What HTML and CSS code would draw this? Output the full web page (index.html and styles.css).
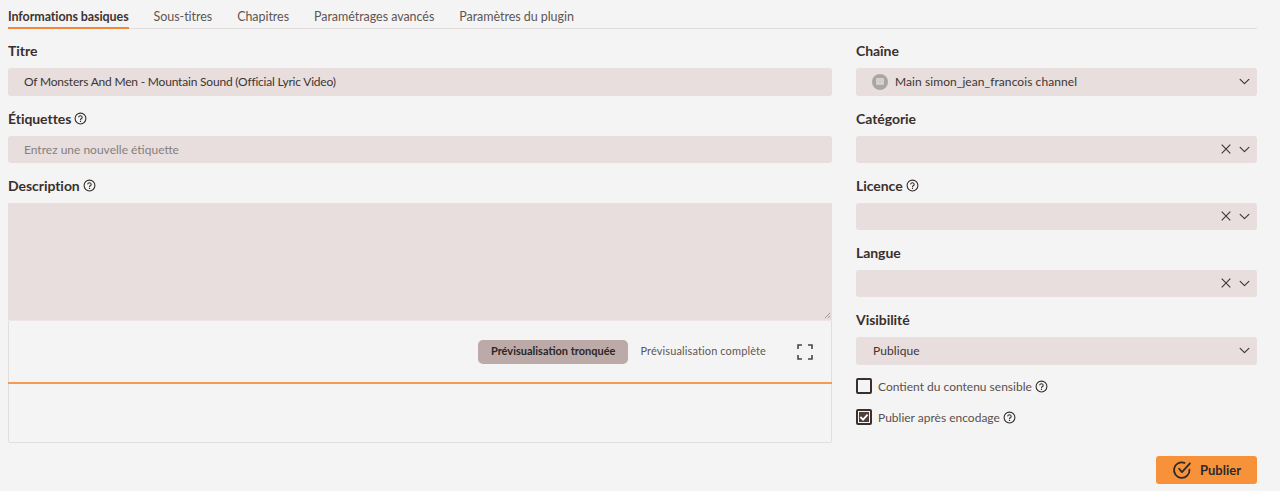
FILE: index.html
```html
<!DOCTYPE html>
<html lang="fr">
<head>
<meta charset="utf-8">
<title>Publier</title>
<link rel="stylesheet" href="styles.css">
</head>
<body>
<svg class="defs" width="0" height="0">
  <symbol id="help" viewBox="0 0 24 24"><circle cx="12" cy="12" r="10" fill="none" stroke="currentColor" stroke-width="2"/><path d="M8.8 9.2a3.2 3.2 0 0 1 6.3.8c0 2.2-3.1 2.6-3.1 4.2" fill="none" stroke="currentColor" stroke-width="2" stroke-linecap="round"/><circle cx="12" cy="17.4" r="1.2" fill="currentColor"/></symbol>
  <symbol id="chev" viewBox="0 0 12 8"><path d="M1 1.5l5 5 5-5" fill="none" stroke="currentColor" stroke-width="1.3" stroke-linecap="round" stroke-linejoin="round"/></symbol>
  <symbol id="clear" viewBox="0 0 10 10"><path d="M.7.7l8.6 8.6M9.3.7L.7 9.3" fill="none" stroke="currentColor" stroke-width="1.1"/></symbol>
</svg>
<nav class="tabs">
  <a class="tab active">Informations basiques</a>
  <a class="tab">Sous-titres</a>
  <a class="tab">Chapitres</a>
  <a class="tab">Paramétrages avancés</a>
  <a class="tab">Paramètres du plugin</a>
</nav>
<main class="form">
  <section class="col-left">
    <label class="label">Titre</label>
    <div class="field h28 title-value">Of Monsters And Men - Mountain Sound (Official Lyric Video)</div>
    <label class="label">Étiquettes <svg class="help"><use href="#help"/></svg></label>
    <div class="field h27 placeholder">Entrez une nouvelle étiquette</div>
    <label class="label">Description <svg class="help"><use href="#help"/></svg></label>
    <div class="markdown">
      <div class="textarea">
        <svg class="grip" viewBox="0 0 8 8"><path d="M1 7L7 1M4.5 7L7 4.5" stroke="#777" stroke-width=".8" fill="none"/></svg>
      </div>
      <div class="preview-bar">
        <span class="pill active">Prévisualisation tronquée</span>
        <span class="pill">Prévisualisation complète</span>
        <svg class="expand" viewBox="0 0 16 16"><path d="M1 5V1h4M11 1h4v4M15 11v4h-4M5 15H1v-4" fill="none" stroke="#4d4542" stroke-width="1.6"/></svg>
      </div>
      <div class="preview"></div>
    </div>
  </section>
  <section class="col-right">
    <label class="label">Chaîne</label>
    <div class="field h28 select">
      <span class="avatar"><i></i></span>
      <span class="grow">Main simon_jean_francois channel</span>
      <svg class="chev"><use href="#chev"/></svg>
    </div>
    <label class="label">Catégorie</label>
    <div class="field h27 select"><span class="grow"></span><svg class="clear"><use href="#clear"/></svg><svg class="chev"><use href="#chev"/></svg></div>
    <label class="label">Licence <svg class="help"><use href="#help"/></svg></label>
    <div class="field h27 select"><span class="grow"></span><svg class="clear"><use href="#clear"/></svg><svg class="chev"><use href="#chev"/></svg></div>
    <label class="label">Langue</label>
    <div class="field h27 select"><span class="grow"></span><svg class="clear"><use href="#clear"/></svg><svg class="chev"><use href="#chev"/></svg></div>
    <label class="label">Visibilité</label>
    <div class="field h28 select public"><span class="grow">Publique</span><svg class="chev"><use href="#chev"/></svg></div>
    <div class="check first"><span class="box"></span>Contient du contenu sensible <svg class="help"><use href="#help"/></svg></div>
    <div class="check"><span class="box on"><svg viewBox="0 0 10 10"><path d="M2 5l2.2 2.2L8 3" fill="none" stroke="#fff" stroke-width="1.5"/></svg></span>Publier après encodage <svg class="help"><use href="#help"/></svg></div>
    <div class="actions">
      <button class="publish">
        <svg viewBox="0 0 24 24"><path d="M21 11.5A9.3 9.3 0 1 1 15 3.4" fill="none" stroke="#2e2a28" stroke-width="2.2" stroke-linecap="round"/><path d="M8.5 10.5l3.5 4L21.500 4" fill="none" stroke="#2e2a28" stroke-width="2.2" stroke-linecap="round" stroke-linejoin="round"/></svg>
        Publier
      </button>
    </div>
  </section>
</main>
</body>
</html>
```
FILE: styles.css
```css
* { box-sizing: border-box; }
html, body { height: 100%; }
body {
  margin: 0;
  padding: 8px 23px 0 8px;
  background: #f4f4f4;
  color: #3e3533;
  font-family: "Lato", "Noto Sans", sans-serif;
  font-size: 13px;
  overflow: hidden;
}
.defs { position: absolute; }
.tabs {
  display: flex;
  gap: 25px;
  height: 21px;
  border-bottom: 1px solid #dfdcdb;
  font-size: 12.5px;
  letter-spacing: -.05px;
  color: #5f5654;
}
.tab { height: 21px; line-height: 17px; }
.tab.active { color: #3e3533; font-weight: 700; border-bottom: 2px solid #f2873a; letter-spacing: -.09px; }
.form {
  display: grid;
  grid-template-columns: 824px 401px;
  gap: 24px;
  padding-top: 12px;
}
.label {
  display: flex;
  align-items: center;
  gap: 3px;
  height: 20px;
  margin: 13px 0 7px;
  padding-bottom: 2px;
  font-size: 14px;
  font-weight: 700;
  letter-spacing: -.05px;
  color: #3a2f2d;
}
.col-left > .label:first-child, .col-right > .label:first-child { margin-top: 0; }
.help { width: 13px; height: 13px; color: #332b29; flex: none; }
.field {
  display: flex;
  align-items: center;
  background: #e7dedd;
  border-radius: 3px;
  padding: 0 16px 1px;
}
.h28 { height: 28px; }
.h27 { height: 27px; }
.title-value { font-size: 12px; letter-spacing: -.2px; color: #3e3533; }
.placeholder { font-size: 12px; color: #86807e; }
.textarea {
  position: relative;
  height: 118px;
  margin: 0 -1px;
  background: #e7dedd;
  border-radius: 3px 3px 0 0;
  border-bottom: 1px dotted #f0eeee;
}
.grip { position: absolute; right: 1px; bottom: 1px; width: 7px; height: 7px; }
.markdown { border: 1px solid #e2e0df; border-top: 0; border-radius: 0 0 2px 2px; height: 240px; }
.preview-bar {
  display: flex;
  align-items: center;
  justify-content: flex-end;
  height: 63px;
  padding: 0 19px 0 0;
  border-bottom: 2px solid #f59a55;
  margin: 0 -1px;
}
.pill {
  display: flex;
  align-items: center;
  height: 24px;
  padding: 0 13px 2px 12px;
  border-radius: 5px;
  font-size: 11px;
  letter-spacing: .12px;
  color: #5f5654;
}
.pill.active { background: #bcaaa8; color: #2d2624; font-weight: 700; padding: 0 13px 2px; letter-spacing: 0; }
.expand { width: 16px; height: 16px; margin-left: 18px; }
.select { font-size: 12px; letter-spacing: .08px; padding-right: 7px; }
.public { padding-left: 17px; }
.grow { flex: 1; }
.avatar {
  width: 16px; height: 16px; border-radius: 50%; background: #aba6a5;
  display: flex; align-items: center; justify-content: center;
  margin-right: 7px;
}
.avatar i { width: 8px; height: 7px; background: #d3cfce; border-radius: 1px; display: block; }
.chev { width: 11px; height: 7px; color: #3e3533; }
.clear { width: 10px; height: 10px; margin-right: 8px; color: #3e3533; }
.check {
  display: flex;
  align-items: center;
  height: 16px;
  gap: 3px;
  margin-top: 15px;
  font-size: 12px;
  color: #5a504e;
}
.check.first { margin-top: 13px; }
.box {
  width: 16px; height: 16px; border: 2px solid #3a2f2d; border-radius: 2px;
  margin-right: 3px; display: flex; flex: none;
}
.box.on { background: #4f3f3c; box-shadow: inset 0 0 0 1px #f4f4f4; }
.box svg { width: 12px; height: 12px; }
.actions { display: flex; justify-content: flex-end; margin-top: 31px; }
.publish {
  display: flex;
  align-items: center;
  justify-content: center;
  gap: 8px;
  width: 101px;
  height: 28px;
  padding-bottom: 1px;
  border: 0;
  border-radius: 3px;
  background: #f8923a;
  color: #2e2a28;
  font: 700 13px "Lato", sans-serif;
}
.publish svg { width: 20px; height: 20px; }
```
